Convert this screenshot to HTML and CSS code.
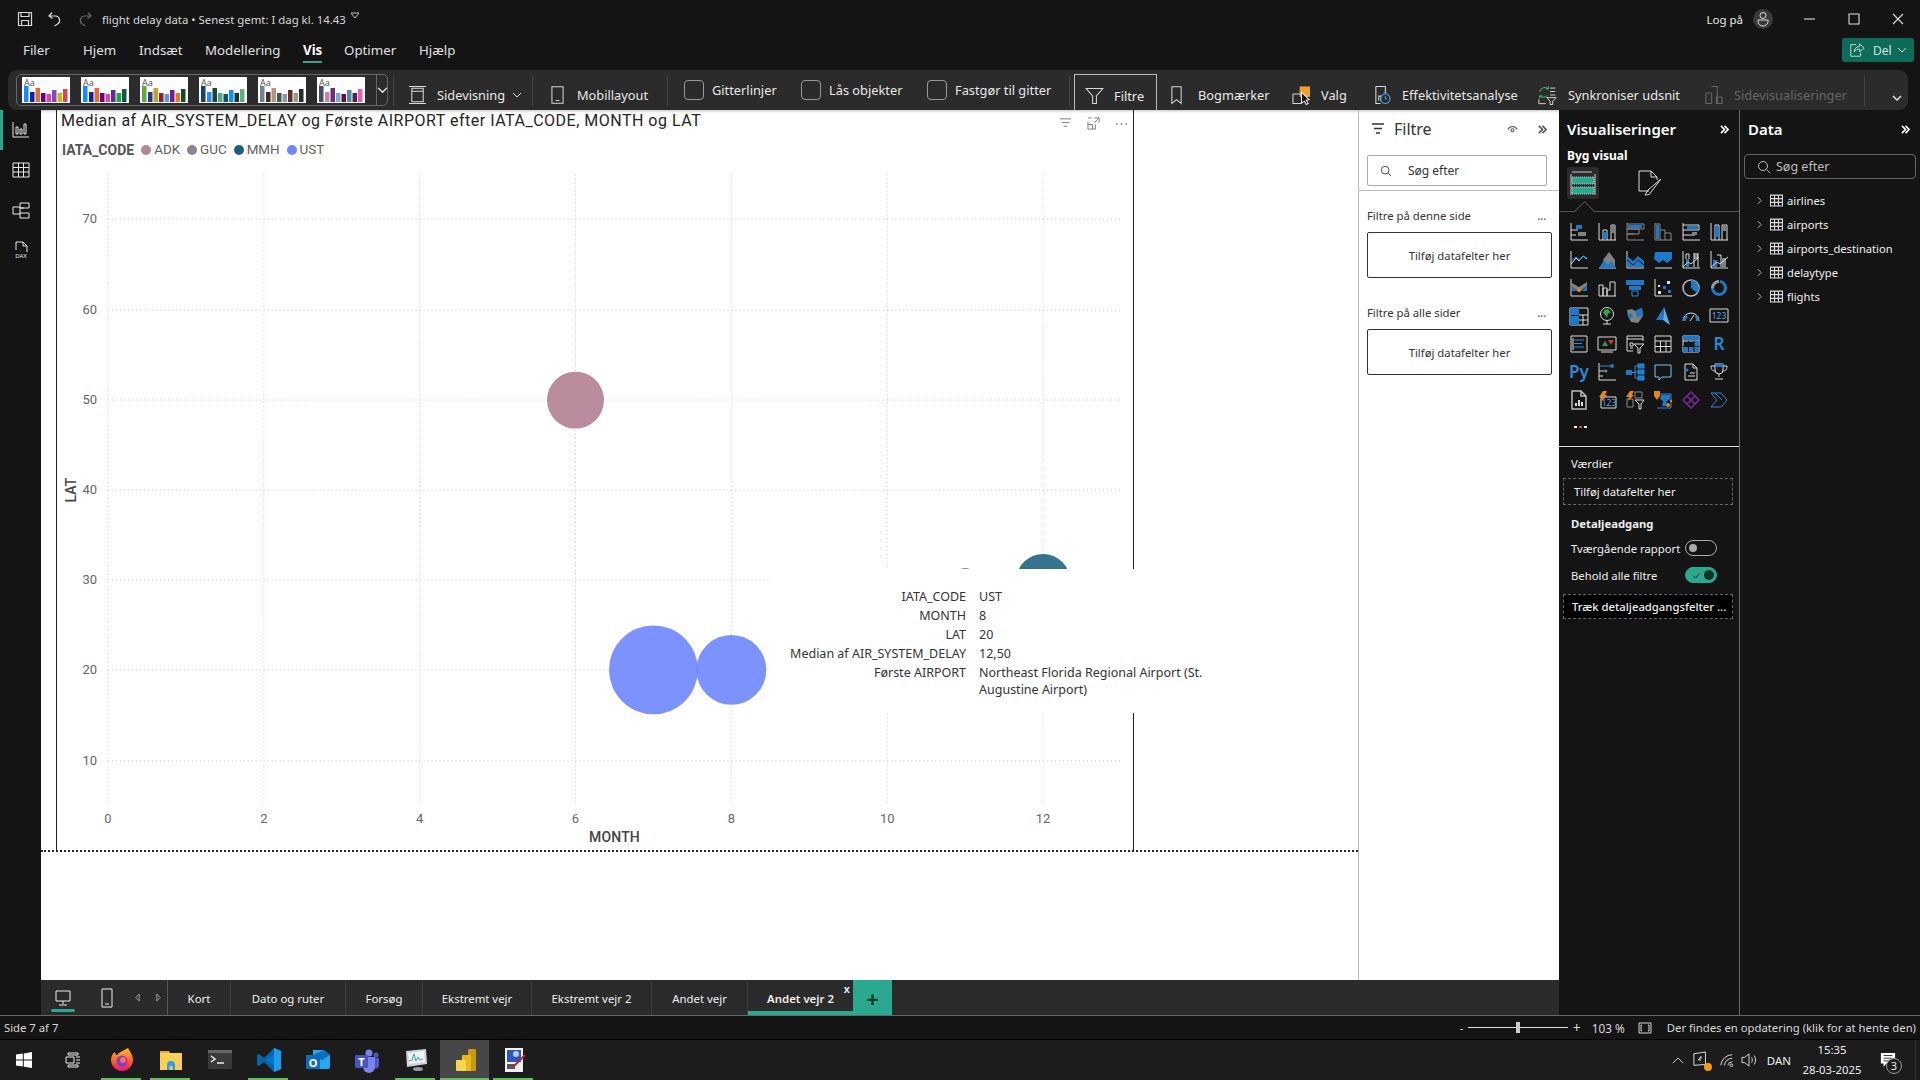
FILE: index.html
```html
<!DOCTYPE html>
<html lang="da">
<head>
    <meta charset="UTF-8">
    <title>flight delay data</title>
    <link rel="stylesheet" href="styles.css">
</head>
<body>
    <!-- title bar -->
    <header class="titlebar">
        <svg class="qa qa-save" viewBox="0 0 16 16"><path d="M1.500 1.500h13v13h-13zM4 1.500v4h8v-4M4.500 14.500v-5h7v5"/></svg>
        <svg class="qa" viewBox="0 0 16 16"><path d="M5 1.500 2 5l3.500 2.500M2.500 5H9a4.500 4.500 0 0 1 1 8.500L7.500 15"/></svg>
        <svg class="qa qa-off" viewBox="0 0 16 16"><path d="M11 1.500 14 5l-3.500 2.500M13.500 5H7a4.500 4.500 0 0 0-1 8.500L8.500 15"/></svg>
        <span class="doc-title">flight delay data • Senest gemt: I dag kl. 14.43</span>
        <svg class="doc-caret" viewBox="0 0 10 8"><path d="M1 1h8L5 6z"/></svg>
        <span class="login">Log på</span>
        <span class="avatar"><svg viewBox="0 0 20 20"><circle cx="10" cy="6.500" r="3"/><path d="M5 11h10v1.500a5 4.500 0 0 1-10 0z"/></svg></span>
        <svg class="win win-min" viewBox="0 0 12 12"><path d="M0 6h11"/></svg>
        <svg class="win" viewBox="0 0 12 12"><path d="M1 1h10v10H1z"/></svg>
        <svg class="win" viewBox="0 0 12 12"><path d="M1 1l10 10M11 1 1 11"/></svg>
    </header>

    <!-- menu -->
    <nav class="menubar">
        <a>Filer</a>
        <a>Hjem</a>
        <a>Indsæt</a>
        <a>Modellering</a>
        <a class="active">Vis</a>
        <a>Optimer</a>
        <a>Hjælp</a>
        <span class="share">
            <svg viewBox="0 0 18 18"><path d="M8 3H2v13h11v-4M6 11c0-4 3-6 6-6V2l5 5-5 4V8c-3 0-5 1-6 3z"/></svg>
            Del
            <svg class="share-caret" viewBox="0 0 10 6"><path d="M1 1l4 4 4-4"/></svg>
        </span>
    </nav>

    <!-- ribbon -->
    <section class="ribbon">
        <div class="gallery">
            <svg class="thumb" viewBox="0 0 48 26"><text x="2" y="9">Aa</text><rect x="2" y="9" width="4.500" height="16" fill="#118dff"/><rect x="8" y="15" width="4.500" height="10" fill="#12239e"/><rect x="13.500" y="11" width="4.500" height="14" fill="#e66c37"/><rect x="19" y="16" width="4.500" height="9" fill="#6b007b"/><rect x="24.500" y="17" width="4.500" height="8" fill="#e044a7"/><rect x="30" y="13" width="4.500" height="12" fill="#744ec2"/><rect x="35.500" y="16" width="4.500" height="9" fill="#d9b300"/><rect x="41" y="12" width="4.500" height="13" fill="#d64550"/></svg>
            <svg class="thumb" viewBox="0 0 48 26"><text x="2" y="9">Aa</text><rect x="2" y="9" width="4.500" height="16" fill="#118dff"/><rect x="8" y="15" width="4.500" height="10" fill="#12239e"/><rect x="13.500" y="11" width="4.500" height="14" fill="#e66c37"/><rect x="19" y="16" width="4.500" height="9" fill="#6b007b"/><rect x="24.500" y="17" width="4.500" height="8" fill="#e044a7"/><rect x="30" y="13" width="4.500" height="12" fill="#5b2e91"/><rect x="35.500" y="16" width="4.500" height="9" fill="#1aab40"/><rect x="41" y="12" width="4.500" height="13" fill="#15584a"/></svg>
            <svg class="thumb" viewBox="0 0 48 26"><text x="2" y="9">Aa</text><rect x="2" y="9" width="4.500" height="16" fill="#62a744"/><rect x="8" y="15" width="4.500" height="10" fill="#2c3a7c"/><rect x="13.500" y="11" width="4.500" height="14" fill="#c2a22c"/><rect x="19" y="16" width="4.500" height="9" fill="#8c2332"/><rect x="24.500" y="17" width="4.500" height="8" fill="#5b9bd5"/><rect x="30" y="13" width="4.500" height="12" fill="#6a1f9a"/><rect x="35.500" y="16" width="4.500" height="9" fill="#e6761f"/><rect x="41" y="12" width="4.500" height="13" fill="#17492d"/></svg>
            <svg class="thumb" viewBox="0 0 48 26"><text x="2" y="9">Aa</text><rect x="2" y="9" width="4.500" height="16" fill="#16406f"/><rect x="8" y="15" width="4.500" height="10" fill="#2d8cf0"/><rect x="13.500" y="11" width="4.500" height="14" fill="#17453f"/><rect x="19" y="16" width="4.500" height="9" fill="#59a77f"/><rect x="24.500" y="17" width="4.500" height="8" fill="#174a7a"/><rect x="30" y="13" width="4.500" height="12" fill="#1390f5"/><rect x="35.500" y="16" width="4.500" height="9" fill="#0f3a2e"/><rect x="41" y="12" width="4.500" height="13" fill="#5fb07c"/></svg>
            <svg class="thumb" viewBox="0 0 48 26"><text x="2" y="9">Aa</text><rect x="2" y="9" width="4.500" height="16" fill="#77838a"/><rect x="8" y="15" width="4.500" height="10" fill="#3a2a28"/><rect x="13.500" y="11" width="4.500" height="14" fill="#b39580"/><rect x="19" y="16" width="4.500" height="9" fill="#48524f"/><rect x="24.500" y="17" width="4.500" height="8" fill="#8a9ba0"/><rect x="30" y="13" width="4.500" height="12" fill="#5a3328"/><rect x="35.500" y="16" width="4.500" height="9" fill="#9a9a8c"/><rect x="41" y="12" width="4.500" height="13" fill="#25302c"/></svg>
            <svg class="thumb" viewBox="0 0 48 26"><text x="2" y="9">Aa</text><rect x="2" y="9" width="4.500" height="16" fill="#3b4e63"/><rect x="8" y="15" width="4.500" height="10" fill="#c880ae"/><rect x="13.500" y="11" width="4.500" height="14" fill="#6b2f7a"/><rect x="19" y="16" width="4.500" height="9" fill="#7fa9cc"/><rect x="24.500" y="17" width="4.500" height="8" fill="#6b0b38"/><rect x="30" y="13" width="4.500" height="12" fill="#5887a8"/><rect x="35.500" y="16" width="4.500" height="9" fill="#4a2650"/><rect x="41" y="12" width="4.500" height="13" fill="#e660ad"/></svg>
            <span class="gallery-more"><svg viewBox="0 0 12 8"><path d="M1 1l5 5 5-5"/></svg></span>
        </div>
        <span class="rb-sep sep-gallery"></span>
        <div class="rb-btn">
            <svg class="rb-ico ico-wide" viewBox="0 0 20 20"><path d="M1 1h18M1 19h18M4 3v14h12V3zM4 6h12"/></svg>
            <span>Sidevisning</span>
            <svg class="rb-caret" viewBox="0 0 10 6"><path d="M1 1l4 4 4-4"/></svg>
        </div>
        <span class="rb-sep"></span>
        <div class="rb-btn rb-mobile">
            <svg class="rb-ico" viewBox="0 0 14 20"><path d="M1 1h12v18H1zM5 16h4"/></svg>
            <span>Mobillayout</span>
        </div>
        <span class="rb-sep"></span>
        <label class="rb-check"><span class="box"></span>Gitterlinjer</label>
        <label class="rb-check"><span class="box"></span>Lås objekter</label>
        <label class="rb-check"><span class="box"></span>Fastgør til gitter</label>
        <span class="rb-sep"></span>
        <div class="rb-btn rb-filter">
            <svg class="rb-ico ico-wide" viewBox="0 0 20 20"><path d="M1 2h18l-7 8v8H8v-8z"/></svg>
            <span>Filtre</span>
        </div>
        <div class="rb-btn rb-bookmark">
            <svg class="rb-ico" viewBox="0 0 14 20"><path d="M2 1h10v18l-5-4-5 4z"/></svg>
            <span>Bogmærker</span>
        </div>
        <div class="rb-btn">
            <svg class="rb-ico ico-wide" viewBox="0 0 20 20"><rect class="orange" x="8" y="1" width="11" height="11"/><path d="M1 9h8M1 9v10h9"/><path class="cursor" d="M10 7l8 8-3 .5 2 3.500-2 1-2-3.500-3 2z"/></svg>
            <span>Valg</span>
        </div>
        <div class="rb-btn">
            <svg class="rb-ico ico-wide" viewBox="0 0 20 20"><path d="M3 1h10v7M3 1v18h5M6 16v-5h2v5"/><circle class="blue-stroke" cx="13" cy="14" r="5"/><path class="blue-stroke" d="M13 11v3h2M11 8h4"/></svg>
            <span>Effektivitetsanalyse</span>
        </div>
        <div class="rb-btn rb-sync">
            <svg class="rb-ico ico-wide" viewBox="0 0 22 22"><path class="green-stroke" d="M2 7a6 6 0 0 1 10-3M12 1v3H9M11 11a6 6 0 0 1-9 1M2 15v-3h3"/><path d="M14 3h6M14 7h6M14 11h6M1 16v5h8M10 14h11l-4 4v4h-3v-4z"/></svg>
            <span>Synkroniser udsnit</span>
        </div>
        <div class="rb-btn rb-disabled">
            <svg class="rb-ico ico-wide" viewBox="0 0 20 20"><path d="M1 8h6v11H1zM7 1h6v18M12 12h6v7h-6z"/></svg>
            <span>Sidevisualiseringer</span>
        </div>
        <span class="rb-sep"></span>
        <svg class="rb-collapse" viewBox="0 0 10 6"><path d="M1 1l4 4 4-4"/></svg>
    </section>

    <main class="workspace">
        <!-- view switcher -->
        <aside class="rail">
            <span class="rail-item active"><svg viewBox="0 0 18 18"><path d="M1 1v15h16M4 13V6h2v7zM8 13V8h2v5zM12 13V3h2v10z"/></svg></span>
            <span class="rail-item"><svg viewBox="0 0 18 18"><path d="M1 2h16v14H1zM1 6.500h16M1 11h16M6.500 2v14M11.500 2v14"/></svg></span>
            <span class="rail-item"><svg viewBox="0 0 18 18"><path d="M1 6h7v7H1zM8 2h9v5H8zM8 12h9v5H8zM8 7h4"/></svg></span>
            <span class="rail-item"><svg viewBox="0 0 18 18"><path d="M4 9V1h7l4 4v6M11 1v4h4"/><text class="dax" x="9" y="16.500">DAX</text></svg></span>
        </aside>

        <div class="center">
            <div class="report-row">
                <div class="canvas">
                    <div class="page">
                        <article class="visual">
                            <div class="visual-actions">
                                <svg viewBox="0 0 14 12"><path d="M1 1h12M3 5h8M5 9h4"/></svg>
                                <svg viewBox="0 0 14 14"><path d="M1 5v8h8V8M1 8h5v5M8 1h5v5M13 1 8 6M1 1h4"/></svg>
                                <svg class="dots" viewBox="0 0 14 4"><circle cx="2" cy="2" r="1"/><circle cx="7" cy="2" r="1"/><circle cx="12" cy="2" r="1"/></svg>
                            </div>
                            <h2 class="chart-title">Median af AIR_SYSTEM_DELAY og Første AIRPORT efter IATA_CODE, MONTH og LAT</h2>
                            <div class="legend">
                                <strong>IATA_CODE</strong>
                                <span class="lg lg-adk">ADK</span>
                                <span class="lg lg-guc">GUC</span>
                                <span class="lg lg-mmh">MMH</span>
                                <span class="lg lg-ust">UST</span>
                            </div>
                            <svg class="plot" viewBox="56 171 1078 680">
                                <g class="grid">
                                    <path d="M107 174v629M263 174v629M419 174v629M575 174v629M731 174v629M887 174v629M1043 174v629"/>
                                    <path d="M107 219h1013M107 310h1013M107 400h1013M107 490h1013M107 580h1013M107 670h1013M107 761h1013"/>
                                </g>
                                <g class="ticks ticks-y">
                                    <text x="96" y="223">70</text><text x="96" y="314">60</text><text x="96" y="404">50</text>
                                    <text x="96" y="494">40</text><text x="96" y="584">30</text><text x="96" y="674">20</text><text x="96" y="765">10</text>
                                </g>
                                <g class="ticks ticks-x">
                                    <text x="107" y="823">0</text><text x="263" y="823">2</text><text x="419" y="823">4</text><text x="575" y="823">6</text>
                                    <text x="731" y="823">8</text><text x="887" y="823">10</text><text x="1043" y="823">12</text>
                                </g>
                                <text class="axis-name" x="614" y="842">MONTH</text>
                                <text class="axis-name" transform="translate(75 490) rotate(-90)">LAT</text>
                                <circle class="b-adk" cx="575" cy="400" r="28.500"/>
                                <circle class="b-guc" cx="965" cy="580" r="12"/>
                                <circle class="b-mmh" cx="1043" cy="581" r="27"/>
                                <circle class="b-ust" cx="653" cy="670" r="44.500"/>
                                <circle class="b-ust" cx="731" cy="670" r="35"/>
                            </svg>
                        </article>
                        <div class="tooltip">
                            <span class="tt-k">IATA_CODE</span><span>UST</span>
                            <span class="tt-k">MONTH</span><span>8</span>
                            <span class="tt-k">LAT</span><span>20</span>
                            <span class="tt-k">Median af AIR_SYSTEM_DELAY</span><span>12,50</span>
                            <span class="tt-k">Første AIRPORT</span><span>Northeast Florida Regional Airport (St. Augustine Airport)</span>
                        </div>
                    </div>
                </div>

                <!-- filters -->
                <aside class="filters">
                    <div class="pane-head">
                        <svg class="filter-lines" viewBox="0 0 14 12"><path d="M1 1h12M3 5.500h8M5 10h4"/></svg>
                        <h3>Filtre</h3>
                        <svg class="eye" viewBox="0 0 14 10"><path d="M1 5c3-5 9-5 12 0"/><circle cx="7" cy="6" r="2"/></svg>
                        <svg class="chev" viewBox="0 0 10 10"><path d="M1 1l4 4-4 4M5 1l4 4-4 4"/></svg>
                    </div>
                    <div class="filter-search">
                        <svg viewBox="0 0 14 14"><circle cx="6" cy="6" r="4.500"/><path d="M9.500 9.500 13 13"/></svg>
                        <span>Søg efter</span>
                    </div>
                    <div class="filter-divider"></div>
                    <div class="filter-group">
                        <div class="filter-label"><span>Filtre på denne side</span><b>...</b></div>
                        <div class="filter-well">Tilføj datafelter her</div>
                    </div>
                    <div class="filter-group">
                        <div class="filter-label"><span>Filtre på alle sider</span><b>...</b></div>
                        <div class="filter-well">Tilføj datafelter her</div>
                    </div>
                </aside>
            </div>

            <!-- page tabs -->
            <footer class="tabs">
                <div class="tab-tools">
                    <svg class="device" viewBox="0 0 18 18"><path d="M2 2h14v10H2zM9 12v3M5 16h8"/></svg>
                    <svg class="device" viewBox="0 0 12 20"><path d="M1 1h10v18H1zM4 16h4"/></svg>
                    <svg class="arrow" viewBox="0 0 6 10"><path d="M5 1 1 5l4 4z"/></svg>
                    <svg class="arrow" viewBox="0 0 6 10"><path d="M1 1l4 4-4 4z"/></svg>
                </div>
                <span class="tab">Kort</span>
                <span class="tab">Dato og ruter</span>
                <span class="tab">Forsøg</span>
                <span class="tab">Ekstremt vejr</span>
                <span class="tab">Ekstremt vejr 2</span>
                <span class="tab">Andet vejr</span>
                <span class="tab tab-active">Andet vejr 2<i>x</i></span>
                <span class="tab-add">+</span>
            </footer>
        </div>

        <!-- visualizations -->
        <aside class="viz">
            <div class="dark-head"><h3>Visualiseringer</h3><svg class="chev" viewBox="0 0 10 10"><path d="M1 1l4 4-4 4M5 1l4 4-4 4"/></svg></div>
            <div class="viz-sub">Byg visual</div>
            <div class="viz-modes">
                <span class="mode mode-on"><svg viewBox="0 0 28 28"><path class="mode-line" d="M3 3h20M2 5v21M26 5v21"/><rect class="teal" x="3" y="8" width="22" height="7"/><rect class="teal" x="3" y="18" width="22" height="7"/></svg></span>
                <span class="mode"><svg viewBox="0 0 28 28"><path d="M14 22H4V2h12l6 6v3M16 2v6h6"/><path d="M26 10 13 21l-3 5c3 0 6-1 6-3z"/></svg></span>
            </div>
            <div class="viz-grid">
                <svg viewBox="0 0 18 18"><path d="M1 0v17h17M1 7h7M1 12h5"/><rect class="bl" x="6" y="2" width="6" height="4"/><rect class="gy" x="8" y="9" width="8" height="4"/></svg>
                <svg viewBox="0 0 18 18"><path d="M1 0v17h17M5 17V7h4v10M13 17V2h4v15"/><rect class="bl" x="5" y="9" width="4" height="7"/><rect class="gy" x="13" y="2" width="4" height="8"/></svg>
                <svg viewBox="0 0 18 18"><path class="gl" d="M1 0v17h17M1 1h17v5H1M1 6h12v5H1M1 11h7"/><rect class="bl" x="2" y="2" width="14" height="3"/></svg>
                <svg viewBox="0 0 18 18"><path class="gl" d="M1 0v17h17M1 1h5v16M6 7h5v10M11 10h6v7"/><rect class="bl" x="2" y="2" width="3" height="14"/></svg>
                <svg viewBox="0 0 18 18"><path d="M1 0v17h17M1 7h16M1 12h12M1 2h16v5"/><rect class="bl" x="5" y="3" width="11" height="3"/><rect class="gy" x="10" y="9" width="5" height="3"/></svg>
                <svg viewBox="0 0 18 18"><path d="M1 0v17h17M5 17V2h4v15M12 17V2h5v15"/><rect class="bl" x="5" y="3" width="4" height="11"/><rect class="gy" x="12" y="3" width="4" height="5"/></svg>

                <svg viewBox="0 0 18 18"><path d="M1 0v17h17M1 13l5-6 3 3 4-5 4 3"/><path class="bs" d="M1 10l5-4 4 3 3-4 4 2"/></svg>
                <svg viewBox="0 0 18 18"><path d="M1 17h17"/><path class="gy" d="M5 9 11 1l6 8v7H8z"/><path class="bl" d="M1 17l5-8 4 5 3-4 5 7z"/></svg>
                <svg viewBox="0 0 18 18"><path d="M1 0v17h17"/><path class="bl" d="M1 5l6 5 5-5 6 5v6H1z"/><path class="blk" d="M1 9l6 5 5-5 6 5"/></svg>
                <svg viewBox="0 0 18 18"><path d="M1 17h17"/><path class="bl" d="M1 1h17v7l-5 4-4-3-4 3-5-4z"/></svg>
                <svg viewBox="0 0 18 18"><path d="M1 0v17h17"/><rect class="bl" x="4" y="8" width="3" height="8"/><rect class="gy" x="12" y="2" width="4" height="6"/><path d="M4 8V3h3v5M12 16V2M16 16V2M1 16l5-5 3 2 8-7"/></svg>
                <svg viewBox="0 0 18 18"><path d="M1 0v17h17M7 4h4v12"/><rect class="bl" x="3" y="9" width="4" height="7"/><rect class="gy" x="12" y="7" width="4" height="9"/><path d="M1 16l6-5 3 2 8-7"/></svg>

                <svg viewBox="0 0 18 18"><path d="M1 0v17h17"/><path class="gy" d="M2 4l7 4 8-5v4l-8 6-7-5z"/><path class="bl" d="M2 8l4 3 3 1 4-1 4-4v5H2z"/><circle class="or" cx="9" cy="11" r="2"/></svg>
                <svg viewBox="0 0 18 18"><path d="M1 17V6h4v11M5 17V9h4v8M9 17v-6h3V3h5v14M1 17h17"/></svg>
                <svg viewBox="0 0 18 18"><rect class="bl" x="0" y="1" width="18" height="5"/><rect class="bl" x="3" y="7" width="12" height="4"/><path class="bs" d="M6 12h6v5H6z"/></svg>
                <svg viewBox="0 0 18 18"><path d="M1 0v17h17"/><rect class="wh" x="13" y="2" width="3" height="3"/><rect class="bl" x="9" y="7" width="3" height="3"/><rect class="wh" x="4" y="6" width="2" height="2"/><rect class="bl" x="14" y="11" width="3" height="3"/><rect class="wh" x="4" y="12" width="3" height="3"/></svg>
                <svg viewBox="0 0 18 18"><circle class="gl2" cx="9" cy="9" r="8"/><path class="bl" d="M9 1a8 8 0 0 1 6 13L9 9z"/></svg>
                <svg viewBox="0 0 18 18"><path class="donut-b" d="M10 2.500a6.500 6.500 0 1 1-7.500 6.500"/><path class="donut-g" d="M2.500 9A6.500 6.500 0 0 1 9 2.500"/></svg>

                <svg viewBox="0 0 18 18"><path d="M0 1h18v17H0z"/><rect class="bl" x="0" y="1" width="9" height="7"/><rect class="bl" x="0" y="9" width="9" height="9"/><path d="M9 8h9M13 8v10M9 13h9"/></svg>
                <svg viewBox="0 0 18 18"><circle cx="9" cy="7" r="6.500"/><path class="gn" d="M6 3l4-1 3 3-3 2-1 4-2-3-2-2z"/><path d="M9 14v3M5 17h8"/></svg>
                <svg viewBox="0 0 18 18"><path class="gy" d="M1 3l5-1 3 2 7-3 1 8-5 7-7-1-3-6z"/><path class="bl" d="M9 4l7-3 1 8-6 1z"/><path class="bl" d="M1 6l5 1 1 3-4 1z"/></svg>
                <svg viewBox="0 0 18 18"><path class="bl2" d="M10 0l6 18-7-5z"/><path class="bl" d="M10 0 2 13l7 0z"/></svg>
                <svg viewBox="0 0 18 18"><path d="M1 14a8 8 0 0 1 16 0"/><path class="bl" d="M1 14a8 8 0 0 1 3-6l2 2a5 5 0 0 0-2 4zM14 8a8 8 0 0 1 3 6h-3a5 5 0 0 0-1-4z"/><path d="M8 14l4-6"/></svg>
                <svg viewBox="0 0 18 18"><path d="M0 2h18v13H0z"/><text class="num" x="9" y="12">123</text></svg>

                <svg viewBox="0 0 18 18"><path d="M1 1h16v16H1z"/><path class="bs" d="M4 5h10M4 8.500h8M4 12h10"/><path d="M3 3v12"/></svg>
                <svg viewBox="0 0 18 18"><path d="M0 2h18v13H0zM3 17h12"/><path class="gn" d="M4 11l3-5 3 5z"/><path class="rd" d="M10 5h6l-3 5z"/></svg>
                <svg viewBox="0 0 18 18"><path d="M1 1h16v5M1 1v15h6M1 4h16M4 8h3v3H4zM4 13h3"/><path d="M8 9h10l-4 4v5h-2v-5z"/></svg>
                <svg viewBox="0 0 18 18"><path d="M1 1h16v16H1zM1 6h16M1 11.500h16M6.500 6v11M12 6v11"/></svg>
                <svg viewBox="0 0 18 18"><path d="M1 1h16v16H1zM1 6h16"/><rect class="bl" x="1" y="1" width="16" height="4"/><rect class="bl" x="12" y="6" width="5" height="11"/><rect class="bl" x="1" y="12" width="16" height="5"/><path class="blk" d="M6.500 6v11M12 6v11M1 11.500h16"/></svg>
                <svg viewBox="0 0 18 18"><text class="lang" x="9" y="15">R</text></svg>

                <svg viewBox="0 0 18 18"><text class="lang" x="9" y="15">Py</text></svg>
                <svg viewBox="0 0 18 18"><path d="M1 0v17h17"/><path class="bs" d="M1 3h11"/><circle class="bl" cx="14" cy="3" r="2"/><path d="M1 8h6M1 13h4"/><circle class="gy" cx="8" cy="8" r="1.500"/></svg>
                <svg viewBox="0 0 18 18"><rect class="bl" x="0" y="7" width="6" height="5"/><rect class="bs2" x="12" y="1" width="6" height="4"/><rect class="bs2" x="12" y="7" width="6" height="4"/><rect class="bs2" x="12" y="13" width="6" height="4"/><path class="bs" d="M6 9.500h3M9 3v12M9 3h3M9 9h3M9 15h3"/></svg>
                <svg viewBox="0 0 18 18"><path class="bs3" d="M1 2h16v12H8l-3 3v-3H1z"/></svg>
                <svg viewBox="0 0 18 18"><path d="M3 1h8l4 4v12H3zM11 1v4h4M8 10h5M6 13h7"/><circle class="bl" cx="5" cy="7" r="1.500"/></svg>
                <svg viewBox="0 0 18 18"><path d="M5 1h8v6a4 4 0 0 1-8 0zM5 3H1c0 4 2 5 4 5M13 3h4c0 4-2 5-4 5M9 11v3M5 16h8"/><rect class="bl" x="5" y="1" width="8" height="3"/></svg>

                <svg viewBox="0 0 18 18"><path class="gl2" d="M2 0h9l5 5v13H2zM11 0v5h5"/><rect class="wh" x="5" y="12" width="2" height="3"/><rect class="wh" x="8" y="9" width="2" height="6"/><rect class="wh" x="11" y="11" width="2" height="4"/></svg>
                <svg viewBox="0 0 18 18"><path d="M3 6h15v11H3z"/><text class="num" x="11" y="15">123</text><path class="or" d="M5 0h4L7 4h2L3 11l1-5H1z"/></svg>
                <svg viewBox="0 0 18 18"><path class="gl" d="M9 1h7v6H9zM1 8h6v8H1z"/><path d="M9 9h9l-3 4v5h-2v-5z"/><path class="or" d="M4 0h4L6 4h2L2 10l1-4H0z"/></svg>
                <svg viewBox="0 0 18 18"><path class="bs" d="M3 3h14v14H3"/><path class="bl" d="M7 4h9v4l-3 2-1 5H8l1-5-3-2z"/><circle class="or" cx="14" cy="14" r="2"/><circle class="or" cx="17" cy="10" r="1.200"/><path class="or" d="M0 0h6v5L3 9 0 5z"/></svg>
                <svg viewBox="0 0 18 18"><path class="pu" d="M9 1l8 8-8 8-8-8zM5 5l8 8M13 5l-8 8"/></svg>
                <svg viewBox="0 0 18 18"><path class="bs" d="M1 2h10l6 7-6 7H1l6-7zM5 2l7 7"/></svg>
            </div>
            <div class="viz-more"><i class="d-w"></i><i class="d-r"></i><i class="d-w"></i></div>
            <div class="viz-fields">
                <div class="field-label">Værdier</div>
                <div class="dropzone">Tilføj datafelter her</div>
                <div class="field-label field-bold">Detaljeadgang</div>
                <div class="toggle-row"><span>Tværgående rapport</span><span class="toggle"></span></div>
                <div class="toggle-row"><span>Behold alle filtre</span><span class="toggle toggle-on"><svg viewBox="0 0 10 8"><path d="M1 4l3 3 5-6"/></svg></span></div>
                <div class="dropzone dropzone-dark">Træk detaljeadgangsfelter ...</div>
            </div>
        </aside>

        <!-- data -->
        <aside class="data">
            <div class="dark-head"><h3>Data</h3><svg class="chev" viewBox="0 0 10 10"><path d="M1 1l4 4-4 4M5 1l4 4-4 4"/></svg></div>
            <div class="data-search">
                <svg viewBox="0 0 14 14"><circle cx="6" cy="6" r="4.500"/><path d="M9.500 9.500 13 13"/></svg>
                <span>Søg efter</span>
            </div>
            <ul class="tables">
                <li><svg class="tw" viewBox="0 0 6 10"><path d="M1 1l4 4-4 4"/></svg><svg class="tbl" viewBox="0 0 12 12"><path d="M.5 1h11v10H.5zM.5 4.300h11M.5 7.700h11M4.200 1v10M7.800 1v10"/></svg>airlines</li>
                <li><svg class="tw" viewBox="0 0 6 10"><path d="M1 1l4 4-4 4"/></svg><svg class="tbl" viewBox="0 0 12 12"><path d="M.5 1h11v10H.5zM.5 4.300h11M.5 7.700h11M4.200 1v10M7.800 1v10"/></svg>airports</li>
                <li><svg class="tw" viewBox="0 0 6 10"><path d="M1 1l4 4-4 4"/></svg><svg class="tbl" viewBox="0 0 12 12"><path d="M.5 1h11v10H.5zM.5 4.300h11M.5 7.700h11M4.200 1v10M7.800 1v10"/></svg>airports_destination</li>
                <li><svg class="tw" viewBox="0 0 6 10"><path d="M1 1l4 4-4 4"/></svg><svg class="tbl" viewBox="0 0 12 12"><path d="M.5 1h11v10H.5zM.5 4.300h11M.5 7.700h11M4.200 1v10M7.800 1v10"/></svg>delaytype</li>
                <li><svg class="tw" viewBox="0 0 6 10"><path d="M1 1l4 4-4 4"/></svg><svg class="tbl" viewBox="0 0 12 12"><path d="M.5 1h11v10H.5zM.5 4.300h11M.5 7.700h11M4.200 1v10M7.800 1v10"/></svg>flights</li>
            </ul>
        </aside>
    </main>

    <div class="statusbar">
        <span class="page-count">Side 7 af 7</span>
        <span class="zoom-minus">-</span>
        <span class="slider"><i></i></span>
        <span class="zoom-plus">+</span>
        <span class="zoom-val">103 %</span>
        <svg class="fit" viewBox="0 0 14 12"><path d="M1 1h12v10H1z"/><path d="M4 3H3v6h1M10 3h1v6h-1"/></svg>
        <span class="update">Der findes en opdatering (klik for at hente den)</span>
    </div>

    <!-- windows taskbar -->
    <div class="taskbar">
        <span class="tb-start"><svg viewBox="0 0 16 16"><path d="M0 2.500 6.800 1.500v6H0zM7.800 1.400 16 0v7.500H7.800zM0 8.500h6.800v6L0 13.500zM7.800 8.500H16V16l-8.200-1.300z"/></svg></span>
        <span class="tb-task"><svg viewBox="0 0 16 16"><path d="M3 1h10v2H3zM3 13h10v2H3zM1 5h8v6H1zM11 5h4M11 8h4M11 11h4"/></svg></span>
        <span class="tb-app running"><svg viewBox="0 0 26 26"><defs><linearGradient id="ff" x1="0" y1="0" x2="0" y2="1"><stop offset="0" stop-color="#ffbd2e"/><stop offset=".6" stop-color="#ff5a2a"/><stop offset="1" stop-color="#e31587"/></linearGradient></defs><path fill="url(#ff)" d="M19 1c2 4 5 7 5 12a11 11 0 1 1-22 0c0-4 2-7 4-8 0 2 1 3 2 3 2-3 6-4 11-7z"/><circle cx="13" cy="14" r="5.500" fill="#7a3bd6"/><circle cx="14" cy="13" r="3" fill="#ff7139"/></svg></span>
        <span class="tb-app running"><svg viewBox="0 0 26 26"><path fill="#e8a92e" d="M2 4h9l2 3h-11z"/><rect x="2" y="6" width="22" height="17" fill="#f8cf58"/><path fill="#2f9ee8" d="M9 23v-5a4 4 0 0 1 8 0v5h-2.500v-4h-3v4z"/></svg></span>
        <span class="tb-app"><svg viewBox="0 0 26 26"><rect x="1" y="3" width="24" height="19" rx="1.500" fill="#3a3a3a"/><rect x="1" y="3" width="24" height="3" fill="#666"/><path class="term" d="M4 9l4 3-4 3"/><path class="term" d="M10 16h7"/></svg></span>
        <span class="tb-app running"><svg viewBox="0 0 26 26"><path fill="#0065a9" d="M18 1 8 11 3 7 1 8v10l2 1 5-4 10 10 7-3V4z"/><path fill="#1f9cf0" d="M18 1l7 3v18l-7 3z"/><path fill="#0078c8" d="M18 8l-8 5 8 5z"/></svg></span>
        <span class="tb-app"><svg viewBox="0 0 26 26"><path fill="#28a8ea" d="M8 3h11l6 5v12a2 2 0 0 1-2 2H8z"/><path fill="#0f6cbd" d="M19 3l6 5-8 5-9-5z"/><rect x="1" y="8" width="14" height="14" fill="#0f6cbd"/><text class="tb-letter" x="8" y="19.500">O</text></svg></span>
        <span class="tb-app"><svg viewBox="0 0 26 26"><circle cx="15" cy="6" r="3.500" fill="#7b83eb"/><circle cx="22" cy="8" r="2.500" fill="#5059c9"/><path fill="#5059c9" d="M18 11h7v7a3.500 3.500 0 0 1-7 0z"/><path fill="#7b83eb" d="M9 10h12v10a6 6 0 0 1-12 0z"/><rect x="1" y="8" width="13" height="13" rx="1" fill="#4b53bc"/><text class="tb-letter" x="7.500" y="18.500">T</text></svg></span>
        <span class="tb-app running"><svg viewBox="0 0 26 26"><path fill="#cfd3d6" d="M3 4l20-2 1 15-20 3z"/><path fill="#eef2f4" d="M5 6l16-2 1 11-16 2z"/><path fill="none" stroke="#3aa0c8" d="M6 14l3-1 2-6 2 7 2-4 2 3 3-1"/><ellipse cx="15" cy="22" rx="5" ry="2" fill="#9a9a9a"/></svg></span>
        <span class="tb-app running tb-current"><svg viewBox="0 0 26 26"><rect x="16" y="2" width="8" height="22" rx="1" fill="#c79a12"/><rect x="10" y="8" width="9" height="16" rx="1" fill="#e6b91e"/><rect x="4" y="13" width="10" height="11" rx="1" fill="#f5d64c"/></svg></span>
        <span class="tb-app running"><svg viewBox="0 0 26 26"><rect x="4" y="1" width="18" height="24" fill="#f1f1f1"/><rect x="6" y="3" width="14" height="12" fill="#2f57b8"/><circle cx="15" cy="7" r="3" fill="#b8c8ee"/><rect x="6" y="17" width="8" height="5" fill="#555"/><path stroke="#c8202f" stroke-width="2" d="M12 20l12-12"/></svg></span>
        <div class="tray">
            <svg class="tray-up" viewBox="0 0 14 8"><path d="M1 7l6-6 6 6"/></svg>
            <span class="tray-sec"><svg viewBox="0 0 18 20"><path d="M1 3l13-2v14L1 16zM6 10l3-4M9 6v3M6 10h3"/></svg><i></i></span>
            <svg class="tray-wifi" viewBox="0 0 16 16"><path d="M1 14A13 13 0 0 1 14 2M5 14a9 9 0 0 1 9-8M9 14a5 5 0 0 1 5-4"/><circle cx="13" cy="14" r="1.500"/></svg>
            <svg class="tray-vol" viewBox="0 0 18 16"><path d="M1 5h3l5-4v14l-5-4H1zM12 5c1 2 1 4 0 6M15 3c2 3 2 7 0 10"/></svg>
            <span class="tray-lang">DAN</span>
            <span class="clock"><span>15:35</span><span>28-03-2025</span></span>
            <span class="notif"><svg viewBox="0 0 18 18"><path d="M1 1h16v12H7l-3 4v-4H1z"/><path class="notif-l" d="M4 4h10M4 7h10M4 10h7"/></svg><b>3</b></span>
        </div>
    </div>
</body>
</html>
```

FILE: styles.css
```css
* {
    box-sizing: border-box;
}
html, body {
    margin: 0;
    padding: 0;
}
body {
    width: 1920px;
    height: 1080px;
    overflow: hidden;
    display: flex;
    flex-direction: column;
    background-color: #141414;
    color: #e8e8e8;
    font-family: "Noto Sans", "Open Sans", sans-serif;
    font-size: 13px;
}
svg {
    display: block;
    fill: none;
    stroke: currentColor;
    flex-shrink: 0;
}
h2, h3 {
    margin: 0;
}

/* title bar */
.titlebar {
    height: 38px;
    display: flex;
    align-items: center;
    padding-left: 17px;
    flex-shrink: 0;
}
.qa {
    width: 16px;
    height: 16px;
    margin-right: 14px;
    color: #d8d8d8;
    stroke-width: 1.2;
}
.qa-off {
    color: #666;
    margin-right: 0;
}
.doc-title {
    margin-left: 9px;
    font-size: 11.4px;
    color: #d8d8d8;
}
.doc-caret {
    width: 10px;
    height: 8px;
    margin: 0 0 6px 4px;
    color: #bbb;
}
.login {
    margin-left: auto;
    font-size: 11.5px;
}
.avatar {
    width: 20px;
    height: 20px;
    margin-left: 10px;
    border-radius: 50%;
    background-color: #3a3a3a;
    color: #ddd;
}
.win {
    width: 12px;
    height: 12px;
    margin-left: 32px;
    color: #ddd;
    stroke-width: 1.1;
}
.win-min {
    margin-left: 31px;
}
.titlebar .win:last-child {
    margin-right: 16px;
}

/* menu */
.menubar {
    height: 32px;
    padding: 0 0 8px 23px;
    display: grid;
    grid-template-columns: 60px 56px 66px 98px 41px 75px 1fr auto;
    align-items: center;
    font-size: 13.3px;
    color: #e0e0e0;
    flex-shrink: 0;
}
.menubar a {
    position: relative;
}
.menubar .active {
    font-weight: 700;
    color: #fff;
}
.menubar .active::after {
    content: "";
    position: absolute;
    left: 0;
    width: 19px;
    bottom: -4px;
    height: 2px;
    background-color: #2aa98f;
}
.share {
    margin-right: 6px;
    width: 72px;
    height: 24px;
    display: flex;
    align-items: center;
    gap: 8px;
    padding-left: 7px;
    border-radius: 3px;
    background-color: #0f6b59;
    font-size: 12px;
    color: #cfe6df;
}
.share svg {
    width: 16px;
    height: 16px;
}
.share .share-caret {
    width: 10px;
    height: 6px;
    margin-left: -3px;
}

/* ribbon */
.ribbon {
    height: 40px;
    margin: 0 12px 0 8px;
    padding-left: 8px;
    background-color: #2b2b2b;
    border-radius: 9px;
    display: grid;
    grid-template-columns: 372px 20px 124px 19px 116px 17px 117px 126px 142px 5px 83px 135px 81px 165px 167px 159px 26px 20px;
    font-size: 12.8px;
    color: #e8e8e8;
    flex-shrink: 0;
    position: relative;
    z-index: 2;
}
.gallery {
    height: 32px;
    margin-top: 4px;
    border: 1px solid #666;
    border-radius: 5px;
    display: flex;
    align-items: center;
    padding-left: 5px;
    gap: 11px;
}
.thumb {
    width: 48px;
    height: 26px;
    background-color: #fff;
    stroke: none;
}
.thumb text {
    font-size: 9px;
    fill: #555;
}
.gallery-more {
    margin-left: auto;
    width: 17px;
    height: 100%;
    border-left: 1px solid #666;
    display: flex;
    align-items: center;
    justify-content: center;
    color: #eee;
}
.gallery-more svg {
    width: 11px;
    height: 7px;
    stroke-width: 1.5;
}
.rb-sep {
    width: 1px;
    height: 30px;
    margin-top: 6px;
    background-color: #444;
}
.sep-gallery {
    margin-left: 5px;
}
.rb-btn {
    height: 30px;
    margin-top: 10px;
    display: flex;
    align-items: center;
    gap: 10px;
    white-space: nowrap;
}
.rb-ico {
    width: 13px;
    height: 20px;
    color: #d8d8d8;
    stroke-width: 1.1;
}
.ico-wide {
    width: 19px;
}
.rb-caret {
    width: 10px;
    height: 6px;
    color: #ddd;
    margin-left: -3px;
}
.rb-mobile {
    gap: 13px;
}
.rb-sync {
    gap: 11px;
}
.rb-check {
    display: flex;
    align-items: center;
    gap: 8px;
    height: 20px;
    margin-top: 10px;
    white-space: nowrap;
}
.box {
    width: 20px;
    height: 20px;
    border: 1px solid #999;
    border-radius: 4px;
}
.rb-filter {
    position: relative;
    height: 36px;
    margin-top: 4px;
    padding: 6px 0 0 10px;
    border: 1px solid #bbb;
    border-bottom: 0;
}
.rb-bookmark {
    padding-left: 13px;
    gap: 15px;
}
.orange {
    fill: #f0a030;
    stroke: none;
}
.cursor {
    fill: #111;
    stroke: #eee;
}
.blue-stroke {
    stroke: #4aa3e0;
}
.green-stroke {
    stroke: #4ec46b;
}
.rb-disabled, .rb-disabled .rb-ico {
    color: #666;
}
.rb-collapse {
    width: 10px;
    height: 6px;
    margin: 25px 0 0 2px;
    color: #ddd;
    stroke-width: 1.5;
}

/* workspace */
.workspace {
    height: 906px;
    display: flex;
    flex-shrink: 0;
    border-bottom: 1px solid #666;
}
.rail {
    width: 41px;
    flex-shrink: 0;
    background-color: #141414;
    display: flex;
    flex-direction: column;
}
.rail-item {
    height: 40px;
    display: flex;
    align-items: center;
    justify-content: center;
    color: #e8e8e8;
}
.rail-item svg {
    width: 18px;
    height: 18px;
}
.rail-item.active {
    border-left: 3px solid #2aa98f;
    padding-right: 3px;
}
.dax {
    font-size: 6px;
    font-family: "Noto Sans", sans-serif;
    fill: #e8e8e8;
    stroke: none;
    text-anchor: middle;
}
.center {
    width: 1518px;
    flex-shrink: 0;
    display: flex;
    flex-direction: column;
}
.report-row {
    height: 870px;
    display: flex;
    background-color: #fff;
}

/* report canvas */
.canvas {
    width: 1317px;
    flex-shrink: 0;
    background-color: #fff;
    box-shadow: inset 0 3px 3px -2px rgba(0, 0, 0, 0.25);
}
.page {
    position: relative;
    height: 742px;
    border-bottom: 2px dotted #222;
}
.visual {
    position: absolute;
    left: 15px;
    top: 0;
    width: 1078px;
    height: 740px;
    border-left: 1px solid #222;
    border-right: 1px solid #222;
    color: #444;
}
.visual-actions {
    position: absolute;
    right: 5px;
    top: 7px;
    display: flex;
    align-items: center;
    gap: 15px;
    color: #777;
}
.visual-actions svg {
    width: 13px;
    height: 13px;
}
.visual-actions .dots {
    height: 4px;
    fill: #888;
    stroke: none;
}
.chart-title {
    padding: 1px 0 0 4px;
    height: 23px;
    font-family: Roboto, "Noto Sans", sans-serif;
    font-size: 16px;
    font-weight: 400;
    line-height: 20px;
    letter-spacing: 0.5px;
    color: #252423;
    white-space: nowrap;
}
.legend {
    height: 38px;
    padding: 8px 0 0 5px;
    display: flex;
    align-items: flex-start;
    font-family: Roboto, "Noto Sans", sans-serif;
    font-size: 13.4px;
    line-height: 18px;
    color: #605e5c;
}
.legend strong {
    color: #555;
    margin-right: 7px;
    font-size: 14px;
}
.lg {
    display: flex;
    align-items: center;
    margin-right: 7px;
}
.lg::before {
    content: "";
    width: 10px;
    height: 10px;
    border-radius: 50%;
    margin: 0 3px 0 0;
}
.lg-adk::before { background-color: #b5859a; }
.lg-guc::before { background-color: #8a8490; }
.lg-mmh::before { background-color: #1b5f7c; }
.lg-ust::before { background-color: #6f86ff; }
.plot {
    width: 1077px;
    height: 680px;
    stroke: none;
    overflow: visible;
}
.grid path {
    stroke: #c8c8c8;
    stroke-width: 1;
    stroke-dasharray: 1 3;
}
.ticks text {
    font-family: Roboto, sans-serif;
    font-size: 13px;
    fill: #666;
}
.ticks-y text {
    text-anchor: end;
}
.ticks-x text {
    text-anchor: middle;
}
.axis-name {
    font-family: Roboto, sans-serif;
    font-size: 14px;
    font-weight: 500;
    letter-spacing: 0.2px;
    fill: #444;
    text-anchor: middle;
}
.b-adk { fill: #b98b9d; }
.b-guc { fill: #8b8791; }
.b-mmh { fill: #36738f; }
.b-ust { fill: #6a84ff; fill-opacity: 0.88; }
.tooltip {
    position: absolute;
    left: 728px;
    top: 459px;
    width: 462px;
    height: 144px;
    padding: 19px 0 0 0;
    background-color: #fff;
    display: grid;
    grid-template-columns: 197px 240px;
    column-gap: 13px;
    grid-auto-rows: min-content;
    font-size: 12.5px;
    line-height: 17px;
    row-gap: 2px;
    color: #333;
}
.tt-k {
    text-align: right;
}

/* filter pane */
.filters {
    width: 201px;
    flex-shrink: 0;
    border-left: 1px solid #bbb;
    background-color: #fff;
    color: #333;
    box-shadow: inset 0 3px 3px -2px rgba(0, 0, 0, 0.25);
}
.pane-head {
    height: 45px;
    display: flex;
    align-items: center;
    padding: 0 12px 7px 12px;
}
.filter-lines {
    width: 14px;
    height: 12px;
    stroke-width: 1.3;
    margin-right: 9px;
}
.pane-head h3 {
    font-size: 16px;
    font-weight: 400;
    flex: 1;
}
.eye {
    width: 11px;
    height: 9px;
    margin-right: 20px;
    stroke-width: 1.3;
    color: #555;
}
.chev {
    width: 9px;
    height: 9px;
    stroke-width: 1.8;
    color: #555;
}
.filter-search {
    height: 31px;
    margin: 0 12px 0 8px;
    border: 1px solid #aaa;
    border-radius: 2px;
    display: flex;
    align-items: center;
    gap: 16px;
    padding-left: 12px;
    font-size: 12px;
}
.filter-search svg {
    width: 12px;
    height: 12px;
}
.filter-divider {
    height: 1px;
    margin-top: 4px;
    background-color: #bbb;
}
.filter-group {
    margin: 17px 7px 0 8px;
}
.filter-group + .filter-group {
    margin-top: 27px;
}
.filter-label {
    display: flex;
    justify-content: space-between;
    height: 16px;
    line-height: 16px;
    font-size: 11.3px;
    margin-bottom: 8px;
    padding-right: 6px;
}
.filter-label b {
    font-weight: 700;
    font-size: 10px;
    color: #666;
}
.filter-well {
    height: 46px;
    border: 1px solid #333;
    border-radius: 2px;
    display: flex;
    align-items: center;
    justify-content: center;
    font-size: 11.3px;
}

/* page tabs */
.tabs {
    height: 35px;
    background-color: #2b2b2b;
    display: grid;
    grid-template-columns: 127px 63px 115px 77px 109px 120px 96px 105px 39px;
    font-size: 11.4px;
    color: #f0f0f0;
}
.tab-tools {
    position: relative;
    display: flex;
    align-items: center;
    border-right: 1px solid #555;
    padding-left: 13px;
}
.device {
    width: 18px;
    height: 18px;
    color: #eee;
}
.device + .device {
    width: 12px;
    height: 20px;
    margin-left: 29px;
}
.arrow {
    width: 5px;
    height: 9px;
    margin-left: 22px;
    color: #bbb;
    stroke-width: 1;
}
.arrow + .arrow {
    margin-left: 16px;
}
.tab-tools::after {
    content: "";
    position: absolute;
    left: 10px;
    top: 29px;
    width: 24px;
    height: 3px;
    border-radius: 2px;
    background-color: #2aa98f;
}
.tab {
    position: relative;
    display: flex;
    align-items: center;
    justify-content: center;
    padding-top: 2px;
    border-right: 1px solid #3c3c3c;
    white-space: nowrap;
}
.tab-active {
    font-weight: 600;
    border-right: 0;
    border-bottom: 4px solid #2aa98f;
    padding-top: 6px;
}
.tab-active i {
    position: absolute;
    right: 3px;
    top: 3px;
    font-style: normal;
    font-size: 11px;
    line-height: 12px;
}
.tab-add {
    background-color: #2aa98f;
    color: #163c34;
    display: flex;
    align-items: center;
    justify-content: center;
    font-size: 22px;
    font-weight: 700;
}

/* visualizations pane */
.viz {
    width: 181px;
    flex-shrink: 0;
    border-right: 1px solid #666;
    background-color: #141414;
}
.dark-head {
    height: 38px;
    padding: 0 10px 0 8px;
    display: flex;
    justify-content: space-between;
    align-items: center;
}
.dark-head h3 {
    font-size: 15px;
    font-weight: 600;
    color: #fff;
}
.dark-head .chev {
    color: #fff;
}
.viz-sub {
    font-size: 12px;
    font-weight: 700;
    padding-left: 8px;
    color: #fff;
    line-height: 16px;
}
.viz-modes {
    position: relative;
    height: 48px;
    padding: 3px 0 0 8px;
    display: flex;
    gap: 34px;
    border-bottom: 1px solid #555;
}
.viz-modes::after {
    content: "";
    position: absolute;
    left: 18px;
    bottom: -1px;
    width: 14px;
    height: 14px;
    margin-bottom: -7px;
    transform: rotate(45deg);
    background-color: #141414;
    border-left: 1px solid #555;
    border-top: 1px solid #555;
}
.mode {
    width: 32px;
    height: 32px;
    padding: 2px;
    border-radius: 3px;
    color: #ddd;
}
.mode-on {
    background-color: #2b2b2b;
}
.mode-line {
    stroke: #ccc;
}
.teal {
    fill: #2aa98f;
    stroke: #ccc;
    stroke-dasharray: 1 1;
}
.viz-grid {
    margin: 11px 0 0 11px;
    display: grid;
    grid-template-columns: repeat(6, 18px);
    grid-auto-rows: 18px;
    column-gap: 10px;
    row-gap: 10px;
    color: #dcdcdc;
}
.viz-grid svg {
    width: 18px;
    height: 18px;
    overflow: visible;
}
.bl { fill: #1d78c8; stroke: none; }
.bl2 { fill: #58b0e0; stroke: none; }
.gy { fill: #808080; stroke: none; }
.wh { fill: #ddd; stroke: none; }
.or { fill: #e8841a; stroke: none; }
.gn { fill: #3a9a50; stroke: none; }
.rd { fill: #d8343a; stroke: none; }
.bs { stroke: #2f88d8; }
.bs2 { stroke: #2f88d8; fill: #1d78c8; }
.bs3 { stroke: #7cc0f0; }
.gl { stroke: #888; }
.gl2 { stroke: #bbb; stroke-width: 1.5; }
.blk { stroke: #141414; }
.pu { stroke: #7a2a9a; stroke-width: 1.5; }
.donut-b { stroke: #1d78c8; stroke-width: 3; }
.donut-g { stroke: #999; stroke-width: 3; }
.num {
    font-family: "Noto Sans", sans-serif;
    font-size: 8.5px;
    fill: #4aa3e0;
    stroke: none;
    text-anchor: middle;
}
.lang {
    font-family: "Noto Sans", sans-serif;
    font-size: 17px;
    font-weight: 600;
    fill: #2f88d8;
    stroke: none;
    text-anchor: middle;
}
.viz-more {
    margin: 17px 0 0 15px;
    display: flex;
    gap: 2px;
    height: 2px;
}
.viz-more i {
    width: 3px;
    height: 2px;
}
.d-w { background-color: #f4f4f4; }
.d-r { background-color: #d84848; }
.viz-fields {
    margin-top: 18px;
    border-top: 1px solid #ddd;
    padding: 9px 6px 0 4px;
    font-size: 11.3px;
    color: #eee;
}
.field-label {
    height: 16px;
    line-height: 16px;
    padding-left: 8px;
    margin-bottom: 6px;
}
.field-bold {
    font-weight: 700;
    margin: 11px 0 8px;
}
.dropzone {
    height: 27px;
    border: 1px dashed #666;
    line-height: 25px;
    padding-left: 10px;
}
.dropzone-dark {
    height: 25px;
    line-height: 23px;
    margin-top: 10px;
    padding-left: 8px;
    background-color: #000;
    white-space: nowrap;
    font-weight: 500;
}
.toggle-row {
    display: flex;
    align-items: center;
    height: 16px;
    padding-left: 8px;
    margin-bottom: 11px;
    position: relative;
}
.toggle {
    position: absolute;
    left: 122px;
    top: 0;
    width: 32px;
    height: 16px;
    border: 1px solid #aaa;
    border-radius: 8px;
}
.toggle::after {
    content: "";
    position: absolute;
    left: 3px;
    top: 3px;
    width: 8px;
    height: 8px;
    border-radius: 50%;
    background-color: #aaa;
}
.toggle-on {
    background-color: #2aa98f;
    border-color: #2aa98f;
    color: #123;
}
.toggle-on::after {
    left: 18px;
    top: 2px;
    width: 10px;
    height: 10px;
    background-color: #14302a;
}
.toggle-on svg {
    width: 9px;
    height: 7px;
    margin: 4px 0 0 6px;
}

/* data pane */
.data {
    flex: 1;
    background-color: #141414;
}
.data-search {
    height: 25px;
    margin: 6px 4px 0 4px;
    border: 1px solid #666;
    border-radius: 4px;
    display: flex;
    align-items: center;
    gap: 5px;
    padding-left: 12px;
    font-size: 12.5px;
    color: #bbb;
}
.data-search svg {
    width: 14px;
    height: 14px;
}
.tables {
    list-style: none;
    margin: 9px 0 0 17px;
    padding: 0;
}
.tables li {
    height: 24px;
    display: flex;
    align-items: center;
    font-size: 11.2px;
    color: #eee;
}
.tw {
    width: 5px;
    height: 9px;
    margin-right: 8px;
    color: #ccc;
}
.tbl {
    width: 13px;
    height: 13px;
    margin-right: 4px;
    color: #ddd;
}

/* status bar */
.statusbar {
    height: 24px;
    display: flex;
    align-items: center;
    border-bottom: 1px solid #000;
    padding-left: 4px;
    font-size: 11.3px;
    color: #d8d8d8;
    flex-shrink: 0;
}
.zoom-minus {
    margin-left: auto;
    width: 8px;
}
.slider {
    position: relative;
    width: 100px;
    height: 1px;
    background-color: #ddd;
}
.slider i {
    position: absolute;
    left: 48px;
    top: -5px;
    width: 4px;
    height: 11px;
    background-color: #ccc;
}
.zoom-plus {
    margin-left: 5px;
    font-size: 14px;
}
.zoom-val {
    margin-left: 11px;
    font-size: 11.8px;
}
.fit {
    width: 14px;
    height: 12px;
    margin-left: 13px;
}
.update {
    margin: 0 4px 0 15px;
}

/* taskbar */
.taskbar {
    height: 40px;
    flex-shrink: 0;
    display: flex;
    background-color: #1c1c1c;
}
.tb-start, .tb-task {
    width: 48px;
    display: flex;
    align-items: center;
    justify-content: center;
}
.tb-task {
    width: 49px;
}
.tb-start svg {
    width: 16px;
    height: 16px;
    fill: #fff;
    stroke: none;
}
.tb-task svg {
    width: 16px;
    height: 16px;
    color: #eee;
}
.tb-app {
    position: relative;
    width: 49px;
    display: flex;
    align-items: center;
    justify-content: center;
}
.tb-app svg {
    width: 26px;
    height: 26px;
    stroke: none;
    fill: none;
}
.running::after {
    content: "";
    position: absolute;
    left: 4px;
    right: 5px;
    bottom: 0;
    height: 2px;
    background-color: #63c05c;
}
.tb-current {
    background-color: #474747;
}
.tb-current::after {
    left: 0;
    right: 0;
}
.term {
    stroke: #eee;
    stroke-width: 1.5;
}
.tb-letter {
    font-family: "Noto Sans", sans-serif;
    font-size: 11px;
    font-weight: 700;
    fill: #fff;
    stroke: none;
    text-anchor: middle;
}
.tray {
    margin-left: auto;
    display: flex;
    align-items: center;
    color: #eee;
    padding-right: 4px;
    border-right: 1px solid #333;
    margin-right: 4px;
    white-space: nowrap;
}
.tray-up {
    width: 12px;
    height: 7px;
}
.tray-sec {
    position: relative;
    margin-left: 9px;
}
.tray-sec svg {
    width: 16px;
    height: 18px;
}
.tray-sec i {
    position: absolute;
    right: -3px;
    bottom: -2px;
    width: 8px;
    height: 8px;
    border-radius: 50%;
    background-color: #f79a12;
}
.tray-wifi {
    width: 14px;
    height: 14px;
    margin-left: 11px;
}
.tray-vol {
    width: 16px;
    height: 14px;
    margin-left: 7px;
}
.tray-lang {
    margin-left: 10px;
    font-size: 11.5px;
}
.clock {
    margin-left: 9px;
    width: 64px;
    display: flex;
    flex-direction: column;
    align-items: center;
    font-size: 11.3px;
    line-height: 20px;
}
.notif {
    position: relative;
    margin: 0 15px 0 16px;
}
.notif svg {
    width: 16px;
    height: 16px;
    fill: #fff;
    stroke: none;
}
.notif-l {
    stroke: #1c1c1c;
}
.notif b {
    position: absolute;
    left: 6px;
    top: 6px;
    width: 16px;
    height: 16px;
    border: 1px solid #999;
    border-radius: 50%;
    background-color: #1c1c1c;
    font-size: 11px;
    font-weight: 400;
    line-height: 14px;
    text-align: center;
}
```
